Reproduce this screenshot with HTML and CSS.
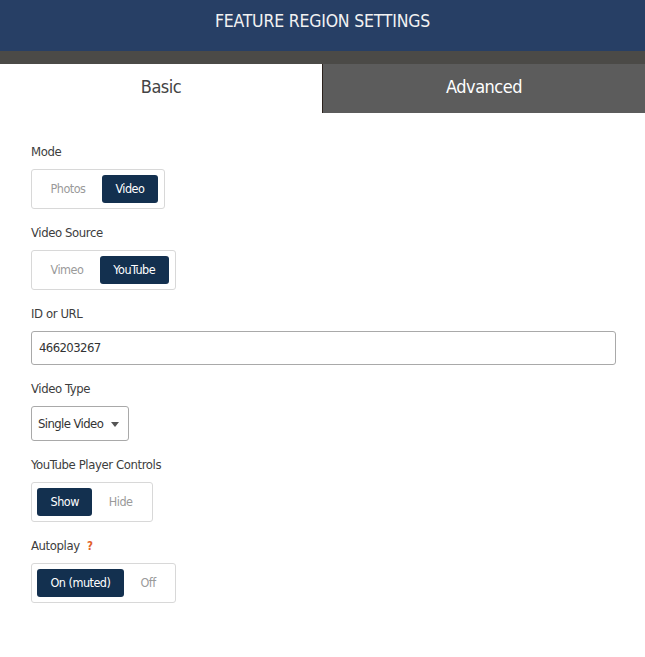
FILE: index.html
```html
<!DOCTYPE html>
<html>
<head>
<meta charset="utf-8">
<link rel="stylesheet" href="styles.css">
</head>
<body>
<div class="header">FEATURE REGION SETTINGS</div>
<div class="tabbar">
  <div class="tab tab-active">Basic</div>
  <div class="tab tab-inactive">Advanced</div>
</div>
<div class="form">
  <div class="field">
    <div class="label">Mode</div>
    <div class="seg">
      <span class="seg-btn">Photos</span>
      <span class="seg-btn seg-on">Video</span>
    </div>
  </div>
  <div class="field">
    <div class="label">Video Source</div>
    <div class="seg">
      <span class="seg-btn">Vimeo</span>
      <span class="seg-btn seg-on">YouTube</span>
    </div>
  </div>
  <div class="field">
    <div class="label">ID or URL</div>
    <div class="input">466203267</div>
  </div>
  <div class="field">
    <div class="label">Video Type</div>
    <div class="select"><span>Single Video</span><span class="caret"></span></div>
  </div>
  <div class="field">
    <div class="label">YouTube Player Controls</div>
    <div class="seg">
      <span class="seg-btn seg-on">Show</span>
      <span class="seg-btn">Hide</span>
    </div>
  </div>
  <div class="field">
    <div class="label">Autoplay <span class="help">?</span></div>
    <div class="seg">
      <span class="seg-btn seg-on">On (muted)</span>
      <span class="seg-btn">Off</span>
    </div>
  </div>
</div>
</body>
</html>
```

FILE: styles.css
```css
html, body {
  margin: 0;
  padding: 0;
  background: #ffffff;
}
body {
  font-family: "DejaVu Sans Condensed", "Liberation Sans", sans-serif;
  color: #3a3a3a;
}
.header {
  height: 51px;
  background: #273f65;
  color: #f2f2f2;
  font-size: 17.5px;
  letter-spacing: -0.2px;
  line-height: 43px;
  text-align: center;
}
.tabbar {
  display: flex;
  background: #4b4a47;
  padding-top: 13px;
}
.tab {
  height: 49px;
  line-height: 46px;
  font-size: 18px;
  letter-spacing: -0.5px;
  text-align: center;
}
.tab-active {
  width: 322px;
  background: #ffffff;
  color: #444444;
}
.tab-inactive {
  flex: 1;
  background: #5c5c5c;
  color: #ffffff;
  border-left: 1px solid #2b221d;
}
.form {
  padding: 31px 0 0 31px;
}
.field {
  margin-bottom: 16px;
}
.label {
  font-size: 13px;
  letter-spacing: -0.4px;
  line-height: 16px;
  height: 16px;
  margin-bottom: 9px;
  color: #3d3d3d;
}
.help {
  color: #e2622b;
  font-weight: bold;
  font-size: 11.5px;
  margin-left: 4px;
}
.seg {
  display: inline-flex;
  gap: 3px;
  border: 1px solid #d8d8d8;
  border-radius: 3px;
  padding: 5px 6px 5px 5px;
}
.seg-btn {
  height: 28px;
  line-height: 28px;
  padding: 0 13.5px;
  font-size: 12.5px;
  letter-spacing: -0.5px;
  color: #9a9a9a;
  border-radius: 3px;
}
.seg-on {
  background: #13304f;
  color: #ffffff;
}
.input {
  width: 576px;
  height: 32px;
  line-height: 32px;
  border: 1px solid #a9a9a9;
  border-radius: 3px;
  padding-left: 7px;
  font-size: 13px;
  letter-spacing: -0.6px;
  color: #333333;
}
.select {
  display: inline-flex;
  align-items: center;
  height: 33px;
  border: 1px solid #a9a9a9;
  border-radius: 3px;
  padding: 0 9px 0 6px;
  font-size: 13px;
  letter-spacing: -0.6px;
  color: #333333;
}
.caret {
  width: 0;
  height: 0;
  margin-left: 8px;
  margin-top: 2px;
  border-left: 4.5px solid transparent;
  border-right: 4.5px solid transparent;
  border-top: 5px solid #555555;
}
```
